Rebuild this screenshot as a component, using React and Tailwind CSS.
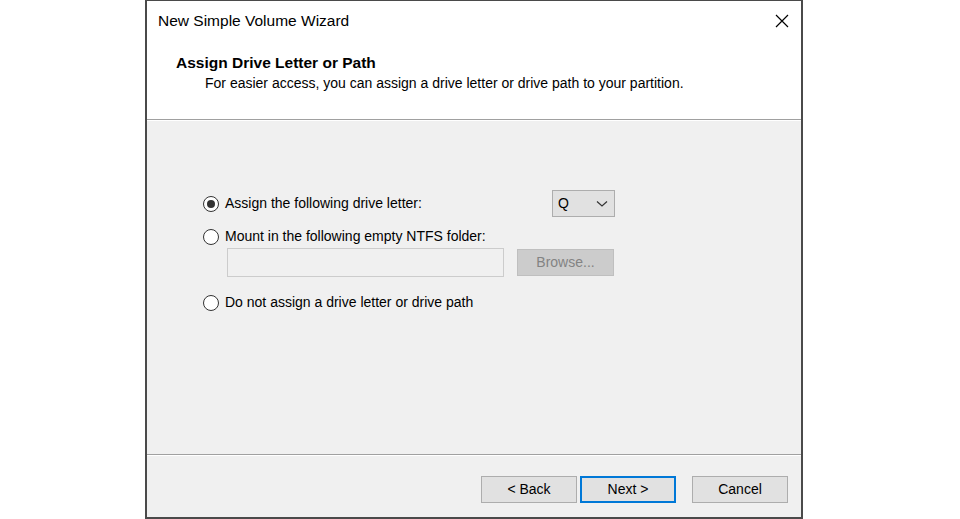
import React, { useState } from 'react';

const Radio = ({ checked, label, onClick }) => (
  <label className="flex items-center gap-[6px] cursor-default" onClick={onClick}>
    <span className="w-[16px] h-[16px] rounded-full border border-[#333333] bg-white flex items-center justify-center">
      {checked && <span className="w-[8px] h-[8px] rounded-full bg-[#333333]" />}
    </span>
    <span>{label}</span>
  </label>
);

const WinButton = ({ children, primary }) => (
  <button
    className={
      'w-[96px] h-[27px] bg-[#e1e1e1] text-[14px] text-black ' +
      (primary ? 'border-2 border-[#0078d7]' : 'border border-[#adadad]')
    }
  >
    {children}
  </button>
);

const App = () => {
  const [choice, setChoice] = useState('letter');

  return (
    <div
      className="w-[960px] h-[519px] bg-white flex"
      style={{ fontFamily: '"Liberation Sans", Arial, sans-serif' }}
    >
      <div className="w-[658px] h-[519px] ml-[145px] border-x-2 border-b-2 border-t border-[#4a4a4a] flex flex-col text-[14px] text-black">
        {/* header */}
        <div className="bg-white h-[118px] flex flex-col">
          <div className="flex items-center justify-between pl-[11px] pr-[10px] h-[40px]">
            <span className="text-[15.5px]">New Simple Volume Wizard</span>
            <svg width="16" height="16" viewBox="0 0 16 16" className="mr-[1px]">
              <path d="M2 2 L14 14 M14 2 L2 14" stroke="#000" strokeWidth="1.2" />
            </svg>
          </div>
          <div className="pl-[29px] pt-[12px]">
            <div className="text-[15.5px] font-bold leading-[20px]">Assign Drive Letter or Path</div>
            <div className="pl-[29px] leading-[20px]">
              For easier access, you can assign a drive letter or drive path to your partition.
            </div>
          </div>
        </div>
        <div className="h-[1px] bg-[#a0a0a0]" />
        <div className="h-[1px] bg-white" />

        {/* body */}
        <div className="flex-1 bg-[#f0f0f0] pl-[56px] pt-[69px]">
          <div className="flex items-center h-[27px]">
            <div className="w-[349px]">
              <Radio checked={choice === 'letter'} label="Assign the following drive letter:" onClick={() => setChoice('letter')} />
            </div>
            <div className="w-[63px] h-[27px] bg-[#e1e1e1] border border-[#adadad] flex items-center justify-between pl-[5px] pr-[6px]">
              <span>Q</span>
              <svg width="12" height="8" viewBox="0 0 12 8">
                <path d="M1 1.5 L6 6 L11 1.5" fill="none" stroke="#333" strokeWidth="1.2" />
              </svg>
            </div>
          </div>
          <div className="mt-[9px]">
            <Radio checked={choice === 'folder'} label="Mount in the following empty NTFS folder:" onClick={() => setChoice('folder')} />
          </div>
          <div className="flex items-center mt-[1px] pl-[24px]">
            <div className="w-[277px] h-[29px] border border-[#cccccc] bg-[#f0f0f0]" />
            <div className="ml-[13px] w-[97px] h-[27px] bg-[#cccccc] border border-[#bfbfbf] text-[#838383] flex items-center justify-center">
              Browse...
            </div>
          </div>
          <div className="mt-[15px]">
            <Radio checked={choice === 'none'} label="Do not assign a drive letter or drive path" onClick={() => setChoice('none')} />
          </div>
        </div>

        <div className="h-[1px] bg-[#a0a0a0]" />
        <div className="h-[1px] bg-white" />

        {/* footer */}
        <div className="h-[61px] bg-[#f0f0f0] flex items-start justify-end pt-[20px] pr-[13px]">
          <WinButton>&lt; Back</WinButton>
          <div className="ml-[3px]">
            <WinButton primary>Next &gt;</WinButton>
          </div>
          <div className="ml-[16px]">
            <WinButton>Cancel</WinButton>
          </div>
        </div>
      </div>
    </div>
  );
};

export default App;
